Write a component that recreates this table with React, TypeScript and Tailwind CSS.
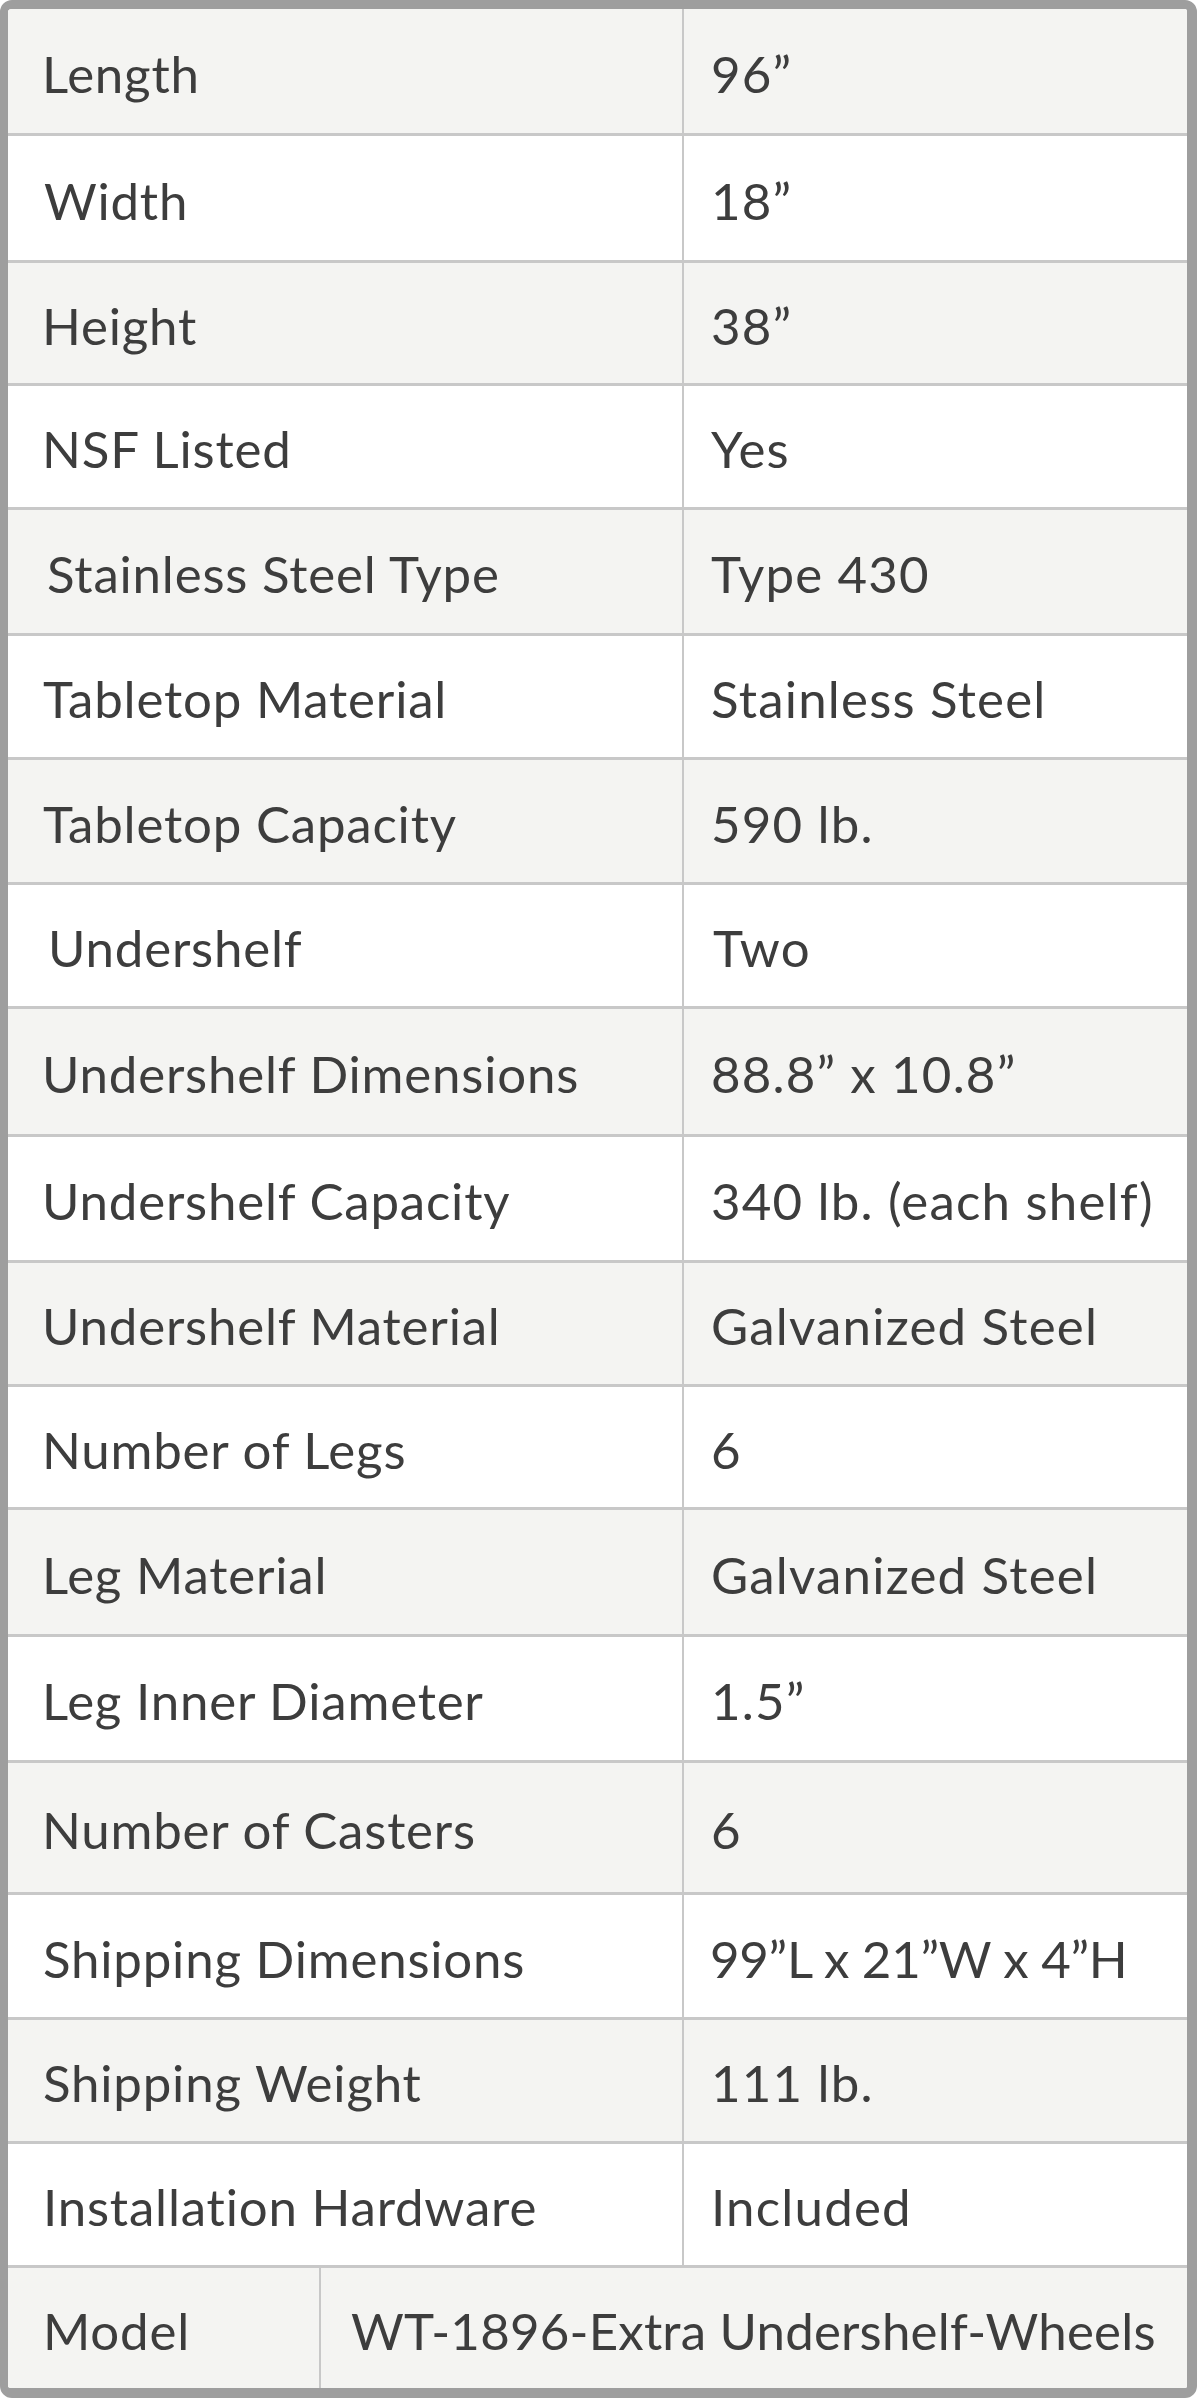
const rows: { label: string; value: string; h: number; lx?: number; vx?: number; vt?: string }[] = [
  { label: 'Length', value: '96”', h: 127 },
  { label: 'Width', value: '18”', h: 127, lx: 2 },
  { label: 'Height', value: '38”', h: 123 },
  { label: 'NSF Listed', value: 'Yes', h: 124 },
  { label: 'Stainless Steel Type', value: 'Type 430', h: 126, lx: 5 },
  { label: 'Tabletop Material', value: 'Stainless Steel', h: 124, lx: 1 },
  { label: 'Tabletop Capacity', value: '590 lb.', h: 125, lx: 1 },
  { label: 'Undershelf', value: 'Two', h: 124, lx: 6, vx: 2 },
  { label: 'Undershelf Dimensions', value: '88.8” x 10.8”', h: 128 },
  { label: 'Undershelf Capacity', value: '340 lb. (each shelf)', h: 126 },
  { label: 'Undershelf Material', value: 'Galvanized Steel', h: 124 },
  { label: 'Number of Legs', value: '6', h: 123 },
  { label: 'Leg Material', value: 'Galvanized Steel', h: 127 },
  { label: 'Leg Inner Diameter', value: '1.5”', h: 126 },
  { label: 'Number of Casters', value: '6', h: 132 },
  { label: 'Shipping Dimensions', value: '99”L x 21”W x 4”H', h: 125, lx: 1, vx: -1, vt: '-0.3px' },
  { label: 'Shipping Weight', value: '111 lb.', h: 124, lx: 1 },
  { label: 'Installation Hardware', value: 'Included', h: 124, lx: 1 },
];

export default function App() {
  return (
    <div
      className="w-[1197px] h-[2398px] bg-white text-[#3d3d3d] text-[51px] leading-none"
      style={{ fontFamily: 'Lato, "Open Sans", sans-serif' }}
    >
      <div className="h-full flex flex-col border-t-[9px] border-l-[8px] border-r-[10px] border-b-[10px] border-[#9e9e9e] rounded-[12px] overflow-hidden">
        {rows.map((r, i) => (
          <div
            key={r.label}
            className={`flex shrink-0 border-b-[3px] border-[#c8c8c8] ${i % 2 === 0 ? 'bg-[#f4f4f2]' : 'bg-white'}`}
            style={{ height: r.h }}
          >
            <div className="w-[674px] flex items-center pl-[34px] pt-[4px] tracking-[0.8px]">
              <span style={{ marginLeft: r.lx ?? 0 }}>{r.label}</span>
            </div>
            <div className="flex-1 flex items-center border-l-2 border-[#c8c8c8] pl-[27px] pt-[4px] tracking-[1.2px]">
              <span style={{ marginLeft: r.vx ?? 0, letterSpacing: r.vt }}>{r.value}</span>
            </div>
          </div>
        ))}
        <div className="flex flex-1 bg-[#f4f4f2]">
          <div className="w-[311px] flex items-center pl-[35px] pt-[4px] tracking-[0.8px]">Model</div>
          <div className="flex-1 flex items-center border-l-2 border-[#c8c8c8] pl-[30px] pt-[4px] tracking-[0.2px] whitespace-nowrap">
            WT-1896-Extra Undershelf-Wheels
          </div>
        </div>
      </div>
    </div>
  );
}
